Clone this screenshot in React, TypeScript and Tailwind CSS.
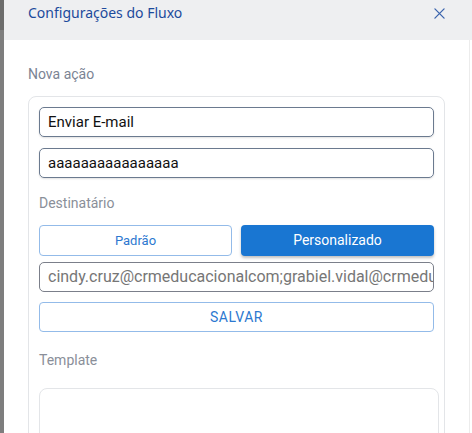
export default function App() {
  return (
    <div className="flex h-[433px] w-[472px] overflow-hidden bg-white font-['Roboto',sans-serif]">
      <div className="flex w-[4px] shrink-0 flex-col">
        <div className="h-[30px] bg-[#6c6c6c]" />
        <div className="flex-1 bg-[#7e7e7e]" />
      </div>
      <div className="flex min-w-0 flex-1 flex-col">
        <div className="flex h-[40px] shrink-0 items-start justify-between bg-[#eeeff1] pl-[24px] pr-[27px] pt-[3px]">
          <h1 className="font-['Noto_Sans',sans-serif] text-[14px] leading-[20px] text-[#1c4a9c]">Configurações do Fluxo</h1>
          <svg width="11" height="11" viewBox="0 0 12 12" className="mt-[5px]">
            <path d="M1 1L11 11M11 1L1 11" stroke="#3a63ad" strokeWidth="1.4" strokeLinecap="round" />
          </svg>
        </div>
        <div className="mr-[2px] flex min-w-0 flex-1 border-r border-[#ececec]">
          <div className="min-w-0 flex-1 pl-[24px] pr-[24px]">
            <p className="mt-[24px] text-[14px] leading-[20px] text-[#7b8494]">Nova ação</p>
            <div className="mt-[12px] rounded-[8px] border border-[#e3e5e8] pl-[10px] pr-[5px] pt-[10px] pb-4">
              <div className="flex flex-col gap-[11px] pr-[5px]">
                <div className="flex h-[30px] items-center rounded-[5px] border border-[#6b7a8f] px-[8px] text-[15px] text-[#111] shadow-[0_1px_2px_rgba(0,0,0,0.12)]">
                  Enviar E-mail
                </div>
                <div className="flex h-[30px] items-center rounded-[5px] border border-[#6b7a8f] px-[8px] text-[15px] text-[#111] shadow-[0_1px_2px_rgba(0,0,0,0.12)]">
                  aaaaaaaaaaaaaaaa
                </div>
              </div>
              <p className="mt-[15px] text-[14px] leading-[20px] text-[#8a8f99]">Destinatário</p>
              <div className="mt-[12px] flex min-w-0 flex-col gap-[6px] pr-[5px]">
                <div className="grid grid-cols-2 gap-[9px]">
                  <button className="h-[31px] rounded-[4px] border border-[#93bbe9] text-[13px] text-[#2c78d0]">Padrão</button>
                  <button className="h-[31px] rounded-[4px] bg-[#1976d2] text-[14px] text-white shadow-[0_2px_3px_rgba(0,0,0,0.25)]">
                    Personalizado
                  </button>
                </div>
                <div className="h-[30px] min-w-0 overflow-hidden whitespace-nowrap rounded-[5px] border border-[#7b7f8a] px-[8px] text-[16px] leading-[28px] text-[#767676]">
                  cindy.cruz@crmeducacionalcom;grabiel.vidal@crmeducacional.com
                </div>
                <button className="mt-[4px] h-[30px] rounded-[4px] border border-[#93bbe9] text-[14px] tracking-[0.5px] text-[#2c78d0]">
                  SALVAR
                </button>
              </div>
              <p className="mt-[18px] text-[14px] leading-[20px] text-[#8a8f99]">Template</p>
              <div className="mt-[18px] h-[80px] rounded-[8px] border border-[#e3e5e8]" />
            </div>
          </div>
        </div>
      </div>
    </div>
  );
}
